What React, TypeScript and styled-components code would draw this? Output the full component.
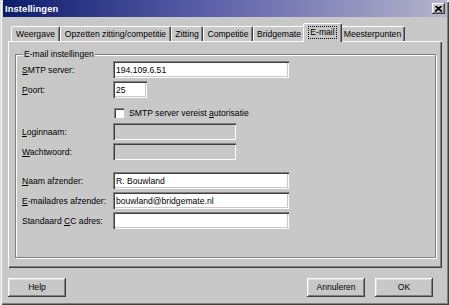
import styled, { createGlobalStyle } from "styled-components";

const FACE = "#c8c8c8";
const SHADOW = "#808080";
const DARK = "#404040";

const GlobalStyle = createGlobalStyle`
  html, body {
    margin: 0;
    padding: 0;
    background: ${FACE};
  }
  body {
    font-family: "Liberation Sans", Arial, sans-serif;
    font-size: 8.6px;
    color: #000;
  }
`;

const Window = styled.div`
  box-sizing: border-box;
  width: 449px;
  height: 305px;
  padding: 0 2px 0 3px;
  background: ${FACE};
  box-shadow: inset 1px 1px #dcdcdc, inset 2px 2px #fff, inset -1px -1px ${DARK},
    inset -2px -2px ${SHADOW};
  display: flex;
  flex-direction: column;
  overflow: hidden;
`;

const TitleBar = styled.div`
  height: 17px;
  display: flex;
  align-items: center;
  justify-content: space-between;
  padding-left: 2px;
  background: linear-gradient(to right, #0c1c6c 0%, #5a5ea8 45%, #b4b4cc 100%);
`;

const Title = styled.span`
  color: #fff;
  font-weight: bold;
  font-size: 9.4px;
  letter-spacing: 0.1px;
`;

const CloseButton = styled.div`
  box-sizing: border-box;
  width: 13px;
  height: 11px;
  margin-right: 2px;
  background: ${FACE};
  box-shadow: inset -1px -1px ${DARK}, inset 1px 1px #fff, inset -2px -2px ${SHADOW};
  display: flex;
  align-items: center;
  justify-content: center;
`;

const Body = styled.div`
  display: flex;
  flex-direction: column;
  padding: 0 4px 0 5px;
`;

const TabStrip = styled.div`
  display: flex;
  align-items: flex-end;
  height: 18px;
  margin-top: 6px;
  padding-left: 3px;
`;

const Tab = styled.div<{ $w: number; $active?: boolean }>`
  box-sizing: border-box;
  flex: none;
  width: ${(p) => p.$w}px;
  height: ${(p) => (p.$active ? 19 : 15)}px;
  margin: 0 ${(p) => (p.$active ? -2 : 0)}px ${(p) => (p.$active ? -1 : 0)}px;
  position: relative;
  z-index: ${(p) => (p.$active ? 1 : 0)};
  background: ${FACE};
  border-top: 1px solid #fff;
  border-left: 1px solid #fff;
  border-right: 1px solid ${DARK};
  border-radius: 2px 2px 0 0;
  box-shadow: inset -1px 0 ${SHADOW};
  display: flex;
  align-items: ${(p) => (p.$active ? "flex-start" : "center")};
  justify-content: center;
  padding-top: ${(p) => (p.$active ? 3 : 0)}px;
  white-space: nowrap;
`;

const Focus = styled.span`
  outline: 1px dotted #000;
  outline-offset: 0;
  padding: 0 1px;
  line-height: 11px;
`;

const Panel = styled.div`
  box-sizing: border-box;
  width: 434px;
  height: 227px;
  padding: 13px 5px 9px 7px;
  background: ${FACE};
  box-shadow: inset 1px 1px #fff, inset -1px -1px ${DARK}, inset -2px -2px ${SHADOW};
`;

const GroupBox = styled.div`
  box-sizing: border-box;
  position: relative;
  width: 421px;
  height: 204px;
  border: 1px solid ${SHADOW};
  box-shadow: inset 1px 1px #fff, 1px 1px #fff;
  padding: 6px 0 0 6px;
`;

const Legend = styled.span`
  position: absolute;
  top: -7px;
  left: 7px;
  padding: 0 1px;
  background: ${FACE};
  line-height: 12px;
`;

const Row = styled.div<{ $top?: number }>`
  display: grid;
  grid-template-columns: 91px auto;
  align-items: center;
  height: 17px;
  margin-top: ${(p) => p.$top ?? 0}px;
`;

const Label = styled.label`
  white-space: nowrap;
`;

const Field = styled.input<{ $w: number }>`
  box-sizing: border-box;
  width: ${(p) => p.$w}px;
  height: 17px;
  margin: 0;
  border: none;
  outline: none;
  padding: 0 2px 0 3px;
  font-family: inherit;
  font-size: 8.6px;
  color: #000;
  background: ${(p) => (p.disabled ? FACE : "#fff")};
  box-shadow: inset 1px 1px ${SHADOW}, inset 2px 2px ${DARK}, inset -1px -1px #fff,
    inset -2px -2px ${FACE};
`;

const CheckLine = styled.div`
  display: flex;
  align-items: center;
  gap: 5px;
  padding-left: 1px;
`;

const CheckBox = styled.span`
  box-sizing: border-box;
  width: 10px;
  height: 10px;
  background: #fff;
  box-shadow: inset 1px 1px ${SHADOW}, inset 2px 2px ${DARK}, inset -1px -1px #fff;
`;

const ButtonBar = styled.div`
  display: flex;
  justify-content: space-between;
  margin-top: 10px;
  padding-right: 10px;
`;

const ButtonGroup = styled.div`
  display: flex;
  gap: 10px;
`;

const Button = styled.div`
  box-sizing: border-box;
  width: 58px;
  height: 19px;
  background: ${FACE};
  box-shadow: inset -1px -1px ${DARK}, inset 1px 1px #fff, inset -2px -2px ${SHADOW},
    inset 2px 2px #dcdcdc;
  display: flex;
  align-items: center;
  justify-content: center;
  padding-bottom: 1px;
`;

const tabs = [
  { label: "Weergave", w: 49 },
  { label: "Opzetten zitting/competitie", w: 111 },
  { label: "Zitting", w: 32 },
  { label: "Competitie", w: 50 },
  { label: "Bridgemate", w: 52 },
  { label: "E-mail", w: 39, active: true },
  { label: "Meesterpunten", w: 65 },
];

export default function App() {
  return (
    <>
      <GlobalStyle />
      <Window>
        <TitleBar>
          <Title>Instellingen</Title>
          <CloseButton>
            <svg width="7" height="6" viewBox="0 0 7 6">
              <path d="M0 0L7 6M1 0L7 5.2M7 0L0 6M6 0L0 5.2" stroke="#000" strokeWidth="1.1" />
            </svg>
          </CloseButton>
        </TitleBar>
        <Body>
          <TabStrip>
            {tabs.map((t) => (
              <Tab key={t.label} $w={t.w} $active={t.active}>
                {t.active ? <Focus>{t.label}</Focus> : t.label}
              </Tab>
            ))}
          </TabStrip>
          <Panel>
            <GroupBox>
              <Legend>E-mail instellingen</Legend>
              <Row>
                <Label>
                  <u>S</u>MTP server:
                </Label>
                <Field $w={176} defaultValue="194.109.6.51" readOnly />
              </Row>
              <Row $top={3}>
                <Label>
                  <u>P</u>oort:
                </Label>
                <Field $w={34} defaultValue="25" readOnly />
              </Row>
              <Row $top={6}>
                <span />
                <CheckLine>
                  <CheckBox />
                  <span>
                    SMTP server vereist <u>a</u>utorisatie
                  </span>
                </CheckLine>
              </Row>
              <Row $top={2}>
                <Label>
                  <u>L</u>oginnaam:
                </Label>
                <Field $w={123} disabled />
              </Row>
              <Row $top={3}>
                <Label>
                  <u>W</u>achtwoord:
                </Label>
                <Field $w={123} disabled />
              </Row>
              <Row $top={12}>
                <Label>
                  <u>N</u>aam afzender:
                </Label>
                <Field $w={176} defaultValue="R. Bouwland" readOnly />
              </Row>
              <Row $top={3}>
                <Label>
                  <u>E</u>-mailadres afzender:
                </Label>
                <Field $w={176} defaultValue="bouwland@bridgemate.nl" readOnly />
              </Row>
              <Row $top={3}>
                <Label>
                  Standaard <u>C</u>C adres:
                </Label>
                <Field $w={176} readOnly />
              </Row>
            </GroupBox>
          </Panel>
          <ButtonBar>
            <Button>Help</Button>
            <ButtonGroup>
              <Button>Annuleren</Button>
              <Button>OK</Button>
            </ButtonGroup>
          </ButtonBar>
        </Body>
      </Window>
    </>
  );
}
